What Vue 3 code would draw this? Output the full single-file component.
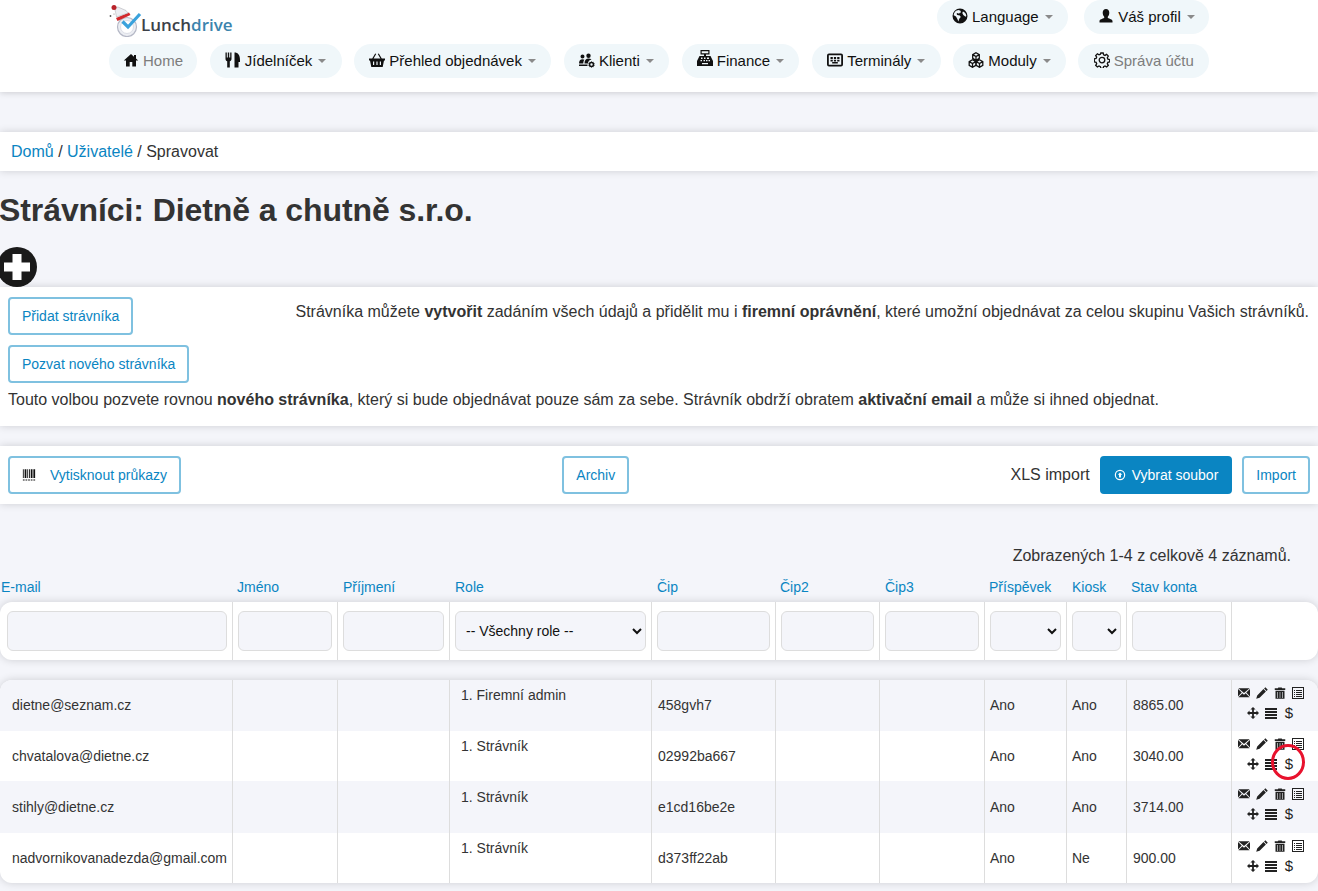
<script setup>
const icons = {
  home: { f: 'M8 2 .8 8.6H3v5.900h3.700V10h2.600v4.500H13V8.600h2.200L13 6.600V3h-2v1.800z' },
  cutlery: { f: 'M.5 .5h1.300v5h1v-5h1.400v5h1v-5h1.300V7c0 1.300-.8 2-1.700 2.300v6.200H2.200V9.300C1.300 9 .5 8.300 .5 7zM9.500 .5C13 .5 15 3 15 8v2h-1.500v5.500h-4z' },
  basket: { f: 'M0 6.500h3.200l3-5 1 .6-2.600 4.400h6.800L8.800 2.100l1-.6 3 5H16v2h-1l-1.300 6.500H2.300L1 8.500H0zM4 9.500V13h1.200V9.500zM7.400 9.500V13h1.200V9.500zM10.800 9.500V13H12V9.500z' },
  users: { f: 'M3.500 2.500a2 2 0 1 1 0 4 2 2 0 0 1 0-4zM9.500 1.500a2.200 2.200 0 1 1 0 4.400 2.200 2.200 0 0 1 0-4.400zM0 11.500c0-2.800 1.300-4.300 3.500-4.300.8 0 1.400.2 1.900.5-.8 1-1.100 2.200-1.100 3.800zM5.500 11.500c0-3 1.500-4.900 4-4.900 1.300 0 2.300.4 3 1.200-2 0-3.500 1.500-3.500 3.700zM0 12.500h8.500V14H0zM12.500 9l.6 1 1.200-.3.4 1.100 1 .7-.6 1 .6 1-1 .7-.4 1.100-1.200-.3-.6 1-.6-1-1.200.3-.4-1.100-1-.7.6-1-.6-1 1-.7.4-1.100 1.200.3zM12.500 11.300a1.200 1.200 0 1 0 0 2.400 1.200 1.200 0 0 0 0-2.400z' },
  register: { f: 'M3.500 0h9v4.500H9V6h4.500L16 11v5H0v-5l2.500-5H7V4.500H3.500zM4.700 1.200v2.100h6.600V1.200zM4 7.500V9h1.500V7.500zM7 7.500V9h1.500V7.500zM10 7.500V9h2V7.500zM3.500 10v1.200H5V10zM6.500 10v1.200H8V10zM9 10v1.200h1.500V10zM11.500 10v1.200H13V10zM5 13v1.300h6V13z' },
  terminal: { f: 'M2 1.500h12a2 2 0 0 1 2 2v9a2 2 0 0 1-2 2H2a2 2 0 0 1-2-2v-9a2 2 0 0 1 2-2zM1.800 3.200v9.600h12.400V3.200zM3.500 5h2.300v2.200H3.500zM6.900 5h2.200v2.200H6.900zM10.200 5h2.300v2.200h-2.300zM3.500 8h2.300v1.500H3.500zM10.200 8h2.300v1.500h-2.300zM5.200 10h5.600v1.500H5.200zM6.900 8h2.200v1.500H6.900z' },
  cubes: { l: 'M8 .7l3.300 1.900v3.800L8 8.300 4.700 6.400V2.600zM4.500 7.700l3.300 1.900v3.800l-3.300 1.900-3.300-1.900V9.600zM11.500 7.700l3.300 1.900v3.800l-3.300 1.900-3.300-1.900V9.600zM4.700 2.600 8 4.500l3.300-1.900M8 4.500v3.800M1.200 9.600l3.300 1.900 3.300-1.900M4.500 11.500v3.800M8.200 9.600l3.300 1.900 3.300-1.900M11.500 11.500v3.800' },
  gear: { l: 'M6.800 1h2.400l.4 1.800 1.400.6 1.600-1 1.700 1.700-1 1.600.6 1.400 1.800.4v2.400l-1.800.4-.6 1.400 1 1.600-1.700 1.700-1.600-1-1.400.6-.4 1.800H6.800l-.4-1.800-1.400-.6-1.600 1-1.700-1.700 1-1.600-.6-1.400-1.800-.4V6.900l1.800-.4.6-1.400-1-1.600 1.700-1.700 1.600 1 1.400-.6zM8 5.300a2.800 2.800 0 1 0 0 5.600 2.800 2.800 0 0 0 0-5.600z' },
  globe: { f: 'M8 .5a7.500 7.500 0 1 1 0 15 7.500 7.500 0 0 1 0-15zM4 2.800C2.700 3.900 1.800 5.500 1.700 7.200L4 8.500l1.500 2.700.8 2.300 1-2.800 1.500-1.700-1-1.500-2.500-.5-.8-1.300 1.200-.6 1.300.6.800-1 1.200-.2-.5-1.800-2-.8zM11 3.500l-.7 1.500 1 2 2.200 1.700.8-.7C14.200 6 12.900 4.400 11 3.500z' },
  user: { f: 'M8 1c2 0 3.300 1.500 3.300 3.700 0 1.800-.8 3.300-1.500 4v1.200c1.800.8 4.700 1.400 4.700 3.100v1.500h-13V13c0-1.700 2.900-2.300 4.700-3.100V8.700C5.500 8 4.700 6.500 4.700 4.700 4.700 2.500 6 1 8 1z' },
  mail: { f: 'M.5 1.500h15L8 8zM0 2.700l5 4.700-5 5.300zM16 2.700v10l-5-5.300zM5.800 8.200 8 10.200l2.200-2 5.300 5.600H.5z' },
  pencil: { f: 'M12.500 .3 15.700 3.500l-1.700 1.700-3.200-3.200zM10 2.800 13.200 6l-8.400 8.400-4.500 1.300 1.300-4.500z' },
  trash: { f: 'M5.500 .5h5v1.300H15V4H1V1.800h4.500zM2 5h12v10.800H2zM4.500 6.500v8h.8v-8zM7.600 6.500v8h.8v-8zM10.700 6.500v8h.8v-8z' },
  list: { f: 'M0 0h16v16H0zM1.330 1.330v13.340h13.340V1.330zM2.670 4H4v1.330H2.670zM5.330 4h8v1.330h-8zM2.670 6.670H4V8H2.670zM5.330 6.670h8V8h-8zM2.670 9.330H4v1.340H2.670zM5.330 9.330h8v1.340h-8zM2.670 12H4v1.330H2.670zM5.330 12h8v1.330h-8z' },
  move: { f: 'M8 0l3.400 3.400H9.200v3.400h3.400V4.600L16 8l-3.400 3.400V9.200H9.200v3.400h2.200L8 16l-3.400-3.400h2.200V9.200H3.400v2.200L0 8l3.400-3.400v2.200h3.400V3.400H4.600z' },
  bars: { f: 'M0 1.330h16V4H0zM0 5.330h16V8H0zM0 9.330h16V12H0zM0 13.330h16V16H0z' },
  barcode: { f: 'M1 1.500h1v10H1zM3 1.500h2v10H3zM6 1.500h1v10H6zM8 1.500h1v10H8zM10 1.500h2v10h-2zM13 1.500h2v10h-2zM1 13h2v1.200H1zM4 13h2v1.200H4zM7 13h2v1.200H7zM10 13h2v1.200h-2zM13 13h2v1.200h-2z' },
  upload: { f: 'M8 1a7 7 0 1 1 0 14A7 7 0 0 1 8 1zm0 1.600a5.400 5.400 0 1 0 0 10.800A5.400 5.400 0 0 0 8 2.600zM8 4.500l3 3.300H9.300v3.500H6.700V7.800H5z' },
}

const accountMenu = [
  { icon: 'globe', label: 'Language', caret: true },
  { icon: 'user', label: 'Váš profil', caret: true },
]
const mainMenu = [
  { icon: 'home', label: 'Home', muted: true },
  { icon: 'cutlery', label: 'Jídelníček', caret: true },
  { icon: 'basket', label: 'Přehled objednávek', caret: true },
  { icon: 'users', label: 'Klienti', caret: true },
  { icon: 'register', label: 'Finance', caret: true },
  { icon: 'terminal', label: 'Terminály', caret: true },
  { icon: 'cubes', label: 'Moduly', caret: true },
  { icon: 'gear', label: 'Správa účtu', muted: true },
]
const columns = ['E-mail', 'Jméno', 'Příjmení', 'Role', 'Čip', 'Čip2', 'Čip3', 'Příspěvek', 'Kiosk', 'Stav konta', '']
const filters = [
  { type: 'input' }, { type: 'input' }, { type: 'input' },
  { type: 'select', options: ['-- Všechny role --'] },
  { type: 'input' }, { type: 'input' }, { type: 'input' },
  { type: 'select', options: [''] }, { type: 'select', options: [''] },
  { type: 'input' }, { type: 'none' },
]
const rows = [
  { email: 'dietne@seznam.cz', role: '1. Firemní admin', chip: '458gvh7', contrib: 'Ano', kiosk: 'Ano', balance: '8865.00' },
  { email: 'chvatalova@dietne.cz', role: '1. Strávník', chip: '02992ba667', contrib: 'Ano', kiosk: 'Ano', balance: '3040.00', marked: true },
  { email: 'stihly@dietne.cz', role: '1. Strávník', chip: 'e1cd16be2e', contrib: 'Ano', kiosk: 'Ano', balance: '3714.00' },
  { email: 'nadvornikovanadezda@gmail.com', role: '1. Strávník', chip: 'd373ff22ab', contrib: 'Ano', kiosk: 'Ne', balance: '900.00' },
]
</script>

<template>
  <div class="page">
    <header class="topbar">
      <div class="topbar-row">
        <a class="logo">
          <svg class="logo-mark" viewBox="0 0 34 34" aria-hidden="true">
            <circle cx="18" cy="24" r="9.500" fill="#eceef3" stroke="#b5b8c6" stroke-width="1.200" />
            <circle cx="18" cy="24" r="6.500" fill="#fff" stroke="#dcdee6" />
            <path d="M13.500 18.500 19 24 31 11" fill="none" stroke="#3aa2dc" stroke-width="3.200" />
            <path d="M7 15 20 9.500 21.500 12 8.500 18z" fill="#d3272b" />
            <path d="M7.500 14C6.500 9 6 6 5 5l4-1 8 3.500 2 2.500z" fill="#ecedf1" stroke="#a6a6ad" stroke-width=".5" />
            <circle cx="5" cy="4.500" r="2.500" fill="#b9232a" />
            <circle cx="1.500" cy="13" r=".9" fill="#555" />
            <circle cx="5" cy="11" r=".6" fill="#888" />
          </svg>
          <span class="logo-text">Lunch<span class="logo-accent">drive</span></span>
        </a>
        <nav class="pills account-pills">
          <a v-for="item in accountMenu" :key="item.label" class="pill" :class="'pill-' + item.icon">
            <svg class="pill-icon" viewBox="0 0 16 16"><path :d="icons[item.icon].f" fill-rule="evenodd" /></svg>
            <span>{{ item.label }}</span>
            <i class="caret"></i>
          </a>
        </nav>
      </div>
      <nav class="pills main-pills">
        <a v-for="item in mainMenu" :key="item.label" class="pill" :class="[{ muted: item.muted }, 'pill-' + item.icon]">
          <svg class="pill-icon" viewBox="0 0 16 16">
            <path v-if="icons[item.icon].f" :d="icons[item.icon].f" fill-rule="evenodd" />
            <path v-if="icons[item.icon].l" :d="icons[item.icon].l" class="outline" />
          </svg>
          <span>{{ item.label }}</span>
          <i v-if="item.caret" class="caret"></i>
        </a>
      </nav>
    </header>

    <div class="card breadcrumb">
      <a>Domů</a> / <a>Uživatelé</a> / Spravovat
    </div>

    <h1 class="title">Strávníci: Dietně a chutně s.r.o.</h1>

    <div class="add-badge">
      <svg viewBox="0 0 40 40"><circle cx="20" cy="20" r="20" fill="#1a1a1a" /><path d="M15.500 7h9v8.500H33v9h-8.500V33h-9v-8.500H7v-9h8.500z" fill="#fff" /></svg>
    </div>

    <section class="card intro">
      <div class="intro-first">
        <button class="btn">Přidat strávníka</button>
        <p>Strávníka můžete <b>vytvořit</b> zadáním všech údajů a přidělit mu i <b>firemní oprávnění</b>, které umožní objednávat za celou skupinu Vašich strávníků.</p>
      </div>
      <button class="btn invite">Pozvat nového strávníka</button>
      <p class="invite-text">Touto volbou pozvete rovnou <b>nového strávníka</b>, který si bude objednávat pouze sám za sebe. Strávník obdrží obratem <b>aktivační email</b> a může si ihned objednat.</p>
    </section>

    <section class="card toolbar">
      <button class="btn print-btn">
        <svg class="btn-icon" viewBox="0 0 16 16"><path :d="icons.barcode.f" /></svg>
        Vytisknout průkazy
      </button>
      <button class="btn">Archiv</button>
      <div class="import">
        <span class="import-label">XLS import</span>
        <button class="btn btn-solid">
          <svg class="upload-icon" viewBox="0 0 16 16"><path :d="icons.upload.f" fill-rule="evenodd" /></svg>
          Vybrat soubor
        </button>
        <button class="btn">Import</button>
      </div>
    </section>

    <p class="count">Zobrazených 1-4 z celkově 4 záznamů.</p>

    <div class="grid heading-row">
      <a v-for="(col, i) in columns" :key="i" class="heading">{{ col }}</a>
    </div>

    <div class="filter-card grid">
      <div v-for="(f, i) in filters" :key="i" class="filter-cell">
        <input v-if="f.type === 'input'" class="control" type="text" />
        <select v-else-if="f.type === 'select'" class="control">
          <option v-for="o in f.options" :key="o">{{ o }}</option>
        </select>
      </div>
    </div>

    <div class="data-card">
      <div v-for="row in rows" :key="row.email" class="grid data-row">
        <div class="cell">{{ row.email }}</div>
        <div class="cell"></div>
        <div class="cell"></div>
        <div class="cell role">{{ row.role }}</div>
        <div class="cell">{{ row.chip }}</div>
        <div class="cell"></div>
        <div class="cell"></div>
        <div class="cell">{{ row.contrib }}</div>
        <div class="cell">{{ row.kiosk }}</div>
        <div class="cell">{{ row.balance }}</div>
        <div class="actions">
          <svg class="action" viewBox="0 0 16 16"><path :d="icons.mail.f" /></svg>
          <svg class="action" viewBox="0 0 16 16"><path :d="icons.pencil.f" /></svg>
          <svg class="action" viewBox="0 0 16 16"><path :d="icons.trash.f" fill-rule="evenodd" /></svg>
          <svg class="action" viewBox="0 0 16 16"><path :d="icons.list.f" fill-rule="evenodd" /></svg>
          <svg class="action" viewBox="0 0 16 16"><path :d="icons.move.f" /></svg>
          <svg class="action" viewBox="0 0 16 16"><path :d="icons.bars.f" /></svg>
          <span class="action dollar">$</span>
          <span v-if="row.marked" class="ring"></span>
        </div>
      </div>
    </div>
  </div>
</template>

<style>
html, body { margin: 0; background: #f4f5fa; }
</style>

<style scoped>
.page {
  font-family: "Liberation Sans", Arial, sans-serif;
  font-size: 16px;
  color: #333;
  min-height: 891px;
  overflow: hidden;
}
.topbar {
  background: #fff;
  height: 92px;
  box-shadow: 0 1px 6px rgba(0, 0, 0, .16);
  padding: 0 109px;
  box-sizing: border-box;
}
.topbar-row { display: flex; justify-content: space-between; height: 34px; }
.logo { display: flex; align-items: flex-end; height: 37px; }
.logo-mark { width: 34px; height: 34px; }
.logo-text {
  font-family: "Open Sans", sans-serif;
  font-size: 17px;
  font-weight: 600;
  color: #3c4148;
  line-height: 24px;
  margin-left: -2px;
}
.logo-accent { color: #3c84ad; }
.pills { display: flex; }
.account-pills { gap: 16px; }
.main-pills { gap: 12.500px; margin-top: 10px; }
.pill {
  display: flex;
  align-items: center;
  height: 34px;
  box-sizing: border-box;
  padding: 0 15.250px 2px;
  border-radius: 17px;
  background: #f0f7fa;
  font-size: 15px;
  color: #111;
  white-space: nowrap;
}
.pill.muted { color: #7d7d7d; }
.pill-home { padding-left: 14px; padding-right: 14px; }
.pill-user { padding-left: 14.250px; padding-right: 14.250px; }
.pill-icon { width: 16px; height: 16px; margin-right: 4px; fill: #111; flex: none; }
.pill-register .pill-icon { transform: translateY(-2px); }
.outline { fill: none; stroke: #111; stroke-width: 1.300; }
.caret {
  width: 0;
  height: 0;
  margin: 2px 0 0 6px;
  border-left: 4px solid transparent;
  border-right: 4px solid transparent;
  border-top: 4px solid #8a8a8a;
}
.card { background: #fff; box-shadow: 0 0 8px rgba(0, 0, 0, .16); }
.breadcrumb {
  margin-top: 40px;
  height: 39px;
  box-sizing: border-box;
  padding: 10px 11px 0;
  line-height: 19px;
}
.breadcrumb a { color: #0a85c2; }
.title {
  margin: 21px 0 0 -1px;
  font-size: 32px;
  line-height: 36px;
  font-weight: 700;
  letter-spacing: -.09px;
  color: #333;
}
.add-badge { height: 40px; margin: 19px 0 0 -3px; position: relative; z-index: 1; }
.add-badge svg { width: 40px; height: 40px; display: block; }
.intro {
  height: 139px;
  padding: 10px 8px 0;
  box-sizing: border-box;
  position: relative;
  z-index: 2;
}
.intro-first { display: flex; justify-content: space-between; align-items: flex-start; }
.intro-first p { margin: 5px 1px 0 0; line-height: 19px; }
.invite { display: block; margin-top: 10px; }
.invite-text { margin: 7px 0 0; line-height: 20px; }
.btn {
  font-family: inherit;
  font-size: 14px;
  color: #0a85c2;
  background: #fff;
  border: 2px solid #7fc1e0;
  border-radius: 4px;
  height: 38px;
  padding: 0 12px;
  white-space: nowrap;
}
.toolbar {
  margin-top: 20px;
  height: 58px;
  padding: 0 8px;
  box-sizing: border-box;
  display: flex;
  justify-content: space-between;
  align-items: center;
}
.print-btn { display: flex; align-items: center; }
.btn-icon { width: 14px; height: 14px; margin-right: 14px; fill: #111; }
.import { display: flex; align-items: center; }
.import-label { margin-right: 10px; }
.btn-solid {
  background: #0a85c2;
  border-color: #0a85c2;
  color: #fff;
  margin-right: 10px;
  display: flex;
  align-items: center;
}
.upload-icon { width: 12px; height: 12px; margin-right: 6px; fill: #fff; }
.count { margin: 42px 27px 0 0; text-align: right; line-height: 19px; }
.grid {
  display: grid;
  grid-template-columns: 233px 105px 112px 202px 124px 104px 105px 82px 60px 105px 1fr;
}
.heading-row { margin-top: 12px; height: 20px; }
.heading { font-size: 14px; line-height: 20px; color: #0a85c2; padding-left: 5px; white-space: nowrap; }
.heading:first-child { padding-left: 1px; }
.heading:nth-child(2), .heading:nth-child(6), .heading:nth-child(8), .heading:nth-child(10) { padding-left: 4px; }
.filter-card {
  margin-top: 5px;
  height: 58px;
  background: #fff;
  border-radius: 12px;
  box-shadow: 0 0 8px rgba(0, 0, 0, .16);
}
.filter-cell {
  border-right: 1px solid #ddd;
  padding: 9px 5px;
  display: flex;
}
.filter-cell:first-child { padding-left: 7px; }
.filter-cell:last-child { border-right: 0; }
.control {
  width: 100%;
  min-width: 0;
  height: 40px;
  box-sizing: border-box;
  background-color: #f4f5fa;
  border: 1px solid #ddd;
  border-radius: 6px;
  font-family: inherit;
  font-size: 14px;
  color: #111;
  padding: 0 6px;
}
.data-card {
  margin-top: 20px;
  background: #fff;
  border-radius: 12px;
  box-shadow: 0 0 8px rgba(0, 0, 0, .16);
  overflow: hidden;
}
.data-row { height: 51px; font-size: 14px; }
.data-row:nth-child(2) { height: 50px; }
.data-row:nth-child(3) { height: 52px; }
.data-row:nth-child(4) { height: 50px; }
.data-row:nth-child(odd) { background: #f4f5fa; }
.cell {
  border-right: 1px solid #ddd;
  padding-left: 6px;
  display: flex;
  align-items: center;
  white-space: nowrap;
}
.cell:first-child { padding-left: 12px; }
.cell:nth-child(8), .cell:nth-child(9) { padding-left: 5px; }
.data-row:first-child .cell { padding-bottom: 1px; }
.cell.role, .data-row:first-child .cell.role { align-items: flex-start; padding: 5px 0 0 11px; line-height: 20px; }
.data-row:nth-child(3) .cell.role { padding-top: 6px; }
.actions {
  position: relative;
  display: flex;
  flex-wrap: wrap;
  justify-content: center;
  align-content: flex-start;
  gap: 8px 6px;
  width: 66px;
  margin-left: 6px;
  padding-top: 7px;
}
.action { width: 12px; height: 12px; fill: #222; display: block; }
.dollar { font-size: 15px; line-height: 12px; text-align: center; color: #222; }
.ring {
  position: absolute;
  left: 33px;
  top: 13px;
  width: 34px;
  height: 36px;
  box-sizing: border-box;
  border: 3px solid #e8122d;
  border-radius: 50%;
}
</style>
